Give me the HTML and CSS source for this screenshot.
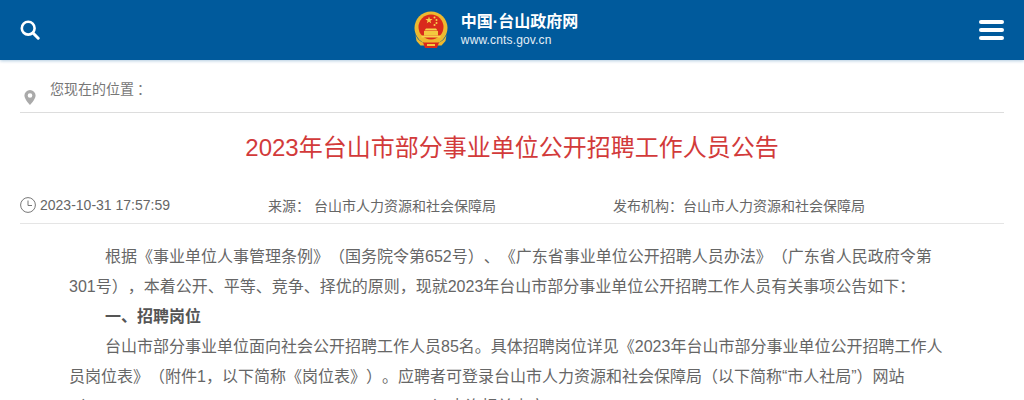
FILE: index.html
```html
<!DOCTYPE html>
<html>
  <head>
    <meta charset="UTF-8">
    <title>2023年台山市部分事业单位公开招聘工作人员公告</title>
    <link rel="stylesheet" href="styles.css">
  </head>
  <body>
    <div class="header">
      <svg class="searchIcon" viewBox="0 0 20 20" width="20" height="20">
        <circle cx="8.2" cy="8.2" r="6.4" fill="none" stroke="#fff" stroke-width="2.6"/>
        <path d="M13 13l5.2 5.2" stroke="#fff" stroke-width="3" stroke-linecap="round"/>
      </svg>
      <div class="brand">
        <svg class="emblem" viewBox="0 0 34 38" width="34" height="38">
          <!-- ring and red field -->
          <circle cx="17" cy="17" r="16.500" fill="#edb92f"/>
          <circle cx="17" cy="16" r="12.500" fill="#d92a1c"/>
          <!-- stars -->
          <path d="M15 5.500l.9 2.600h2.700l-2.200 1.600.8 2.600-2.200-1.600-2.200 1.600.8-2.600-2.200-1.600h2.700z" fill="#f8d24a"/>
          <circle cx="20.500" cy="6.500" r="1" fill="#f8d24a"/>
          <circle cx="22.500" cy="9" r="1" fill="#f8d24a"/>
          <circle cx="22.500" cy="12" r="1" fill="#f8d24a"/>
          <circle cx="20.500" cy="14" r="1" fill="#f8d24a"/>
          <!-- gate -->
          <path d="M12 17.500h10l1.500 2h-13z" fill="#f8d24a"/>
          <rect x="10" y="20" width="14" height="4.500" fill="#f3c93f"/>
          <rect x="7.500" y="24.500" width="19" height="2" fill="#f8d24a"/>
          <!-- base -->
          <path d="M1.500 24c2.500 6 8 9 15.500 9s13-3 15.500-9l-1 6-4 4.500H6.500l-4-4.500z" fill="#edb92f"/>
          <path d="M9 31.500h16l-2 5.500H11z" fill="#d92a1c"/>
          <path d="M13 33h8v2h-8z" fill="#f3c93f"/>
        </svg>
        <div class="brandText">
          <div class="brandName">中国·台山政府网</div>
          <div class="brandUrl">www.cnts.gov.cn</div>
        </div>
      </div>
      <div class="menuIcon">
        <span></span>
        <span></span>
        <span></span>
      </div>
    </div>

    <div class="content">
      <div class="crumbs">
        <svg class="pinIcon" viewBox="0 0 12 15" width="12" height="15">
          <path d="M6 0a5.600 5.600 0 0 0-5.600 5.600C.4 9.500 6 15 6 15s5.600-5.500 5.600-9.400A5.600 5.600 0 0 0 6 0zm0 7.800a2.300 2.300 0 1 1 0-4.600 2.300 2.300 0 0 1 0 4.600z" fill="#aaa"/>
        </svg>
        <span class="crumbText">您现在的位置<span class="crumbColon">：</span></span>
      </div>

      <h1 class="title">2023年台山市部分事业单位公开招聘工作人员公告</h1>

      <div class="meta">
        <div class="metaTime">
          <svg viewBox="0 0 16 16" width="16" height="16">
            <circle cx="8" cy="8" r="7.400" fill="none" stroke="#777" stroke-width="1"/>
            <path d="M8 3.500V8.500H12" fill="none" stroke="#777" stroke-width="1"/>
          </svg>
          <span>2023-10-31 17:57:59</span>
        </div>
        <div class="metaSource">来源：&nbsp;台山市人力资源和社会保障局</div>
        <div class="metaOrg">发布机构：台山市人力资源和社会保障局</div>
      </div>

      <div class="article">
        <p>根据《事业单位人事管理条例》（国务院令第652号）、《广东省事业单位公开招聘人员办法》（广东省人民政府令第301号），本着公开、平等、竞争、择优的原则，现就2023年台山市部分事业单位公开招聘工作人员有关事项公告如下：</p>
        <p><b>一、招聘岗位</b></p>
        <p>台山市部分事业单位面向社会公开招聘工作人员85名。具体招聘岗位详见《2023年台山市部分事业单位公开招聘工作人员岗位表》（附件1，以下简称《岗位表》）。应聘者可登录台山市人力资源和社会保障局（以下简称“市人社局”）网站（http://www.cnts.gov.cn/zwgk/rsxx/gkzp/index.html）查询相关内容。</p>
      </div>
    </div>
  </body>
</html>
```

FILE: styles.css
```css
* {
  box-sizing: border-box;
}

html, body {
  height: 400px;
  overflow: hidden;
}

body {
  margin: 0;
  background-color: #fff;
  color: #666;
  font-family: "Liberation Sans", "Noto Sans CJK SC", sans-serif;
  text-spacing-trim: space-all;
}

.header {
  height: 60px;
  display: flex;
  align-items: center;
  justify-content: space-between;
  padding: 0 20px;
  background-color: #005a9c;
  box-shadow: 0 1px 3px rgba(0, 90, 156, 0.3);
}

.brand {
  display: flex;
  align-items: center;
  gap: 13px;
  margin-right: 27px;
}

.brandName {
  color: #fff;
  font-size: 16px;
  font-weight: bold;
  line-height: 20px;
}

.brandUrl {
  color: #e4eef6;
  font-size: 12px;
  line-height: 16px;
  letter-spacing: 0.15px;
}

.menuIcon {
  width: 25px;
  display: flex;
  flex-direction: column;
  gap: 4px;
}

.menuIcon span {
  height: 4px;
  border-radius: 2px;
  background-color: #fff;
}

.content {
  padding: 0 20px;
}

.crumbs {
  height: 53px;
  display: flex;
  border-bottom: 1px solid #ddd;
  font-size: 14px;
  color: #777;
}

.pinIcon {
  margin: 30px 0 0 4px;
}

.crumbText {
  margin: 18px 0 0 14px;
}

.crumbColon {
  padding-left: 3px;
}

.title {
  margin: 0;
  height: 70px;
  color: #d23a3a;
  font-size: 24px;
  font-weight: normal;
  line-height: 70px;
  text-align: center;
}

.meta {
  height: 41px;
  display: flex;
  align-items: center;
  border-bottom: 1px solid #e5e5e5;
  font-size: 14px;
  color: #666;
  padding-top: 3px;
}

.metaTime {
  width: 248px;
  display: flex;
  align-items: center;
  gap: 4px;
}

.metaSource {
  width: 345px;
}

.article {
  padding: 18px 54px 0 49px;
  font-size: 16px;
  line-height: 30px;
  color: #666;
}

.article p {
  margin: 0;
  text-indent: 36px;
}

.article b {
  color: #555;
}
```
